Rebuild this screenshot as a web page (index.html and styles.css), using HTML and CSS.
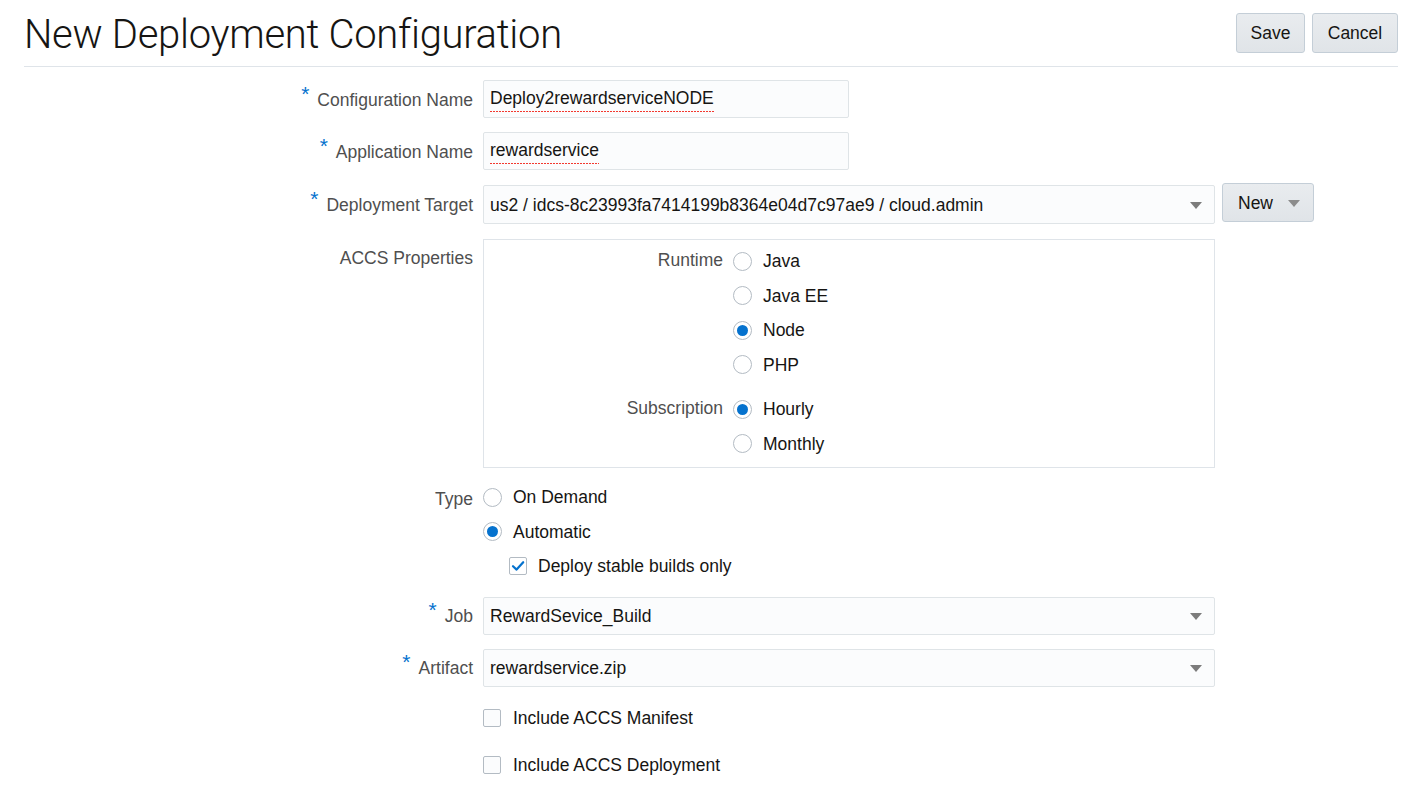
FILE: index.html
```html
<!DOCTYPE html>
<html>
<head>
<meta charset="utf-8">
<title>New Deployment Configuration</title>
<link rel="stylesheet" href="styles.css">
</head>
<body>
<div class="page">
  <header class="header">
    <h1 class="title">New Deployment Configuration</h1>
    <div class="actions">
      <button class="btn btn-save">Save</button>
      <button class="btn btn-cancel">Cancel</button>
    </div>
  </header>

  <div class="form">
    <div class="row row-input">
      <label class="label"><span class="req">*</span>Configuration Name</label>
      <div class="field short"><span class="spell">Deploy2rewardserviceNODE</span></div>
    </div>
    <div class="row row-input app-row">
      <label class="label"><span class="req">*</span>Application Name</label>
      <div class="field short"><span class="spell">rewardservice</span></div>
    </div>
    <div class="row row-input target-row">
      <label class="label"><span class="req">*</span>Deployment Target</label>
      <div class="field select">us2 / idcs-8c23993fa7414199b8364e04d7c97ae9 / cloud.admin<span class="caret"></span></div>
      <button class="btn btn-new">New<span class="caret"></span></button>
    </div>

    <div class="row row-box">
      <label class="label label-top">ACCS Properties</label>
      <div class="box">
        <div class="group">
          <div class="glabel">Runtime</div>
          <div class="options">
            <div class="opt"><span class="radio"></span>Java</div>
            <div class="opt"><span class="radio"></span>Java EE</div>
            <div class="opt"><span class="radio on"></span>Node</div>
            <div class="opt"><span class="radio"></span>PHP</div>
          </div>
        </div>
        <div class="group group-sub">
          <div class="glabel">Subscription</div>
          <div class="options">
            <div class="opt"><span class="radio on"></span>Hourly</div>
            <div class="opt"><span class="radio"></span>Monthly</div>
          </div>
        </div>
      </div>
    </div>

    <div class="row row-type">
      <label class="label label-opt">Type</label>
      <div class="options">
        <div class="opt"><span class="radio"></span>On Demand</div>
        <div class="opt"><span class="radio on"></span>Automatic</div>
        <div class="opt sub"><span class="check on"><svg viewBox="0 0 18 18" width="18" height="18"><path d="M4 9.2 L7.6 12.6 L14.2 5.2" fill="none" stroke="#0572ce" stroke-width="2.2" stroke-linecap="round" stroke-linejoin="round"/></svg></span>Deploy stable builds only</div>
      </div>
    </div>

    <div class="row row-input job-row">
      <label class="label"><span class="req">*</span>Job</label>
      <div class="field select">RewardSevice_Build<span class="caret"></span></div>
    </div>
    <div class="row row-input">
      <label class="label"><span class="req">*</span>Artifact</label>
      <div class="field select">rewardservice.zip<span class="caret"></span></div>
    </div>

    <div class="row row-check">
      <span class="label"></span>
      <div class="opt"><span class="check"></span>Include ACCS Manifest</div>
    </div>
    <div class="row row-check">
      <span class="label"></span>
      <div class="opt"><span class="check"></span>Include ACCS Deployment</div>
    </div>
  </div>
</div>
</body>
</html>
```

FILE: styles.css
```css
* { box-sizing: border-box; }
html, body { margin: 0; padding: 0; background: #ffffff; }
body {
  font-family: "Liberation Sans", Arial, sans-serif;
  font-size: 17.5px;
  color: #161513;
}
.page { padding: 0 27px 0 24px; }

.header {
  display: flex;
  justify-content: space-between;
  align-items: flex-start;
  border-bottom: 1px solid #dfe4e9;
  height: 67px;
}
.title {
  margin: 10px 0 0 0;
  font-family: Roboto, "Liberation Sans", sans-serif;
  font-weight: 300;
  font-size: 40px;
  line-height: 50px;
  color: #161513;
  letter-spacing: -0.3px;
}
.actions { display: flex; gap: 7px; margin-top: 13px; }

.btn {
  font-family: "Liberation Sans", Arial, sans-serif;
  font-size: 17.5px;
  color: #161513;
  height: 40px;
  padding: 0;
  background: linear-gradient(#e9ecef, #e0e4e8);
  border: 1px solid #c4ced7;
  border-radius: 3px;
  padding-top: 1px;
}
.btn-save { width: 69px; }
.btn-cancel { width: 86px; }

.form { display: flex; flex-direction: column; padding-top: 13px; }
.row { display: flex; align-items: center; }
.label {
  width: 449px;
  flex: none;
  margin-right: 10px;
  text-align: right;
  color: #4f4f4f;
  padding-top: 2px;
}
.req {
  color: #0572ce;
  font-size: 21px;
  line-height: 10px;
  position: relative;
  top: -5px;
  margin-right: 8px;
}

.row-input { height: 38px; margin-bottom: 14px; }
.app-row { margin-bottom: 15px; }
.target-row { height: 39px; margin-bottom: 15px; }
.field {
  height: 100%;
  border: 1px solid #dfe4e7;
  border-radius: 2px;
  background: #fbfcfd;
  display: flex;
  align-items: center;
  padding: 2px 6px 0;
  position: relative;
}
.field.short { width: 366px; }
.field.select { width: 732px; }
.spell {
  padding-bottom: 3px;
  background-image: linear-gradient(90deg, #f2392f 60%, transparent 60%);
  background-size: 3px 1px;
  background-repeat: repeat-x;
  background-position: 0 100%;
}
.caret {
  position: absolute;
  right: 12px;
  top: 50%;
  margin-top: -3px;
  width: 0; height: 0;
  border-left: 6px solid transparent;
  border-right: 6px solid transparent;
  border-top: 7px solid #7c7c7c;
}
.btn-new {
  margin-left: 7px;
  height: 39px;
  width: 92px;
  position: relative;
  align-self: flex-start;
  margin-top: -2px;
  text-align: left;
  padding-left: 15px;
}
.btn-new .caret { right: 13px; border-top-color: #8c8c8c; }

.row-box { align-items: flex-start; margin-bottom: 12px; }
.label-top { padding-top: 9px; }
.box {
  width: 732px;
  height: 229px;
  border: 1px solid #dfe4e9;
  padding-top: 4px;
}
.group { display: flex; align-items: flex-start; }
.group-sub { margin-top: 10px; }
.glabel {
  width: 239px;
  margin-right: 10px;
  text-align: right;
  color: #4f4f4f;
  line-height: 34px;
  height: 34px;
  position: relative;
  top: -1px;
}
.options { display: flex; flex-direction: column; }
.opt {
  display: flex;
  align-items: center;
  height: 34.5px;
  color: #161513;
  padding-top: 1px;
}
.radio {
  width: 19px; height: 19px;
  border: 1px solid #b3bbc3;
  border-radius: 50%;
  background: #ffffff;
  margin-right: 11px;
  flex: none;
  position: relative;
  margin-top: -1px;
}
.radio.on::after {
  content: "";
  position: absolute;
  left: 3px; top: 3px;
  width: 11px; height: 11px;
  border-radius: 50%;
  background: #0572ce;
}
.row-type { align-items: flex-start; margin-bottom: 13px; }
.label-opt { line-height: 34px; }
.opt.sub { padding-left: 26px; }
.check {
  width: 18px; height: 18px;
  border: 1px solid #b3bbc3;
  border-radius: 2px;
  background: #fbfcfd;
  margin-right: 12px;
  flex: none;
  display: flex;
  margin-top: -1px;
}
.check.on { background: #ffffff; margin-right: 11px; }
.check svg { margin: -1px; }
.job-row { margin-bottom: 14px; }
.row-check { height: 34px; }
.row-check + .row-check { margin-top: 13px; }
```
